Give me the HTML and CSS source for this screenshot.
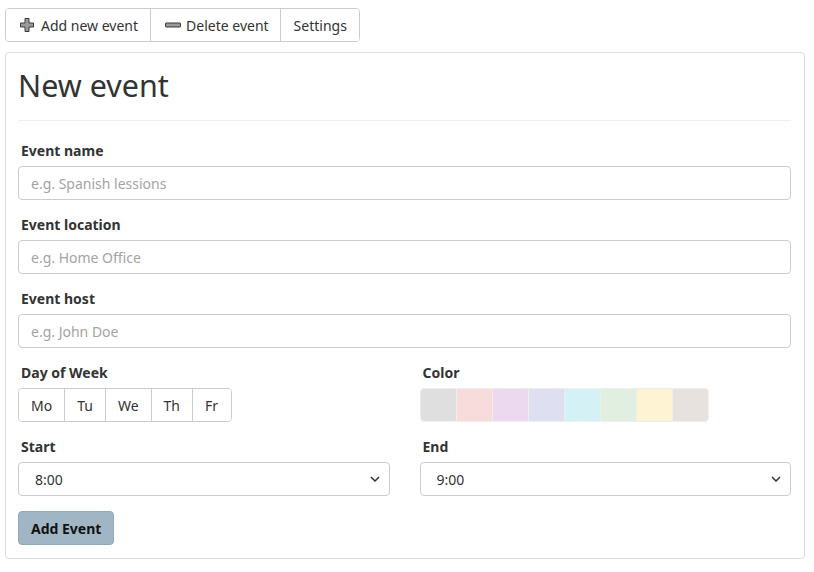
FILE: index.html
```html
<!DOCTYPE html>
<html lang="en">
<head>
<meta charset="utf-8">
<title>New event</title>
<link rel="stylesheet" href="styles.css">
</head>
<body>
<div class="toolbar">
  <button class="tb-btn" type="button">
    <svg class="tb-icon" width="16" height="16" viewBox="0 0 16 16"><path d="M6 1.5h4v4.5h4.5v4h-4.5v4.5h-4v-4.5h-4.5v-4h4.5z" fill="#9a9a9a" stroke="#3a3a3a" stroke-width="1"/></svg>
    Add new event
  </button>
  <button class="tb-btn tb-del" type="button">
    <svg class="tb-icon" width="16" height="16" viewBox="0 0 16 16"><rect x="0.5" y="6" width="15" height="4" rx="0.5" fill="#9a9a9a" stroke="#3a3a3a" stroke-width="1"/></svg>
    Delete event
  </button>
  <button class="tb-btn" type="button">Settings</button>
</div>

<div class="card">
  <h1 class="title">New event</h1>
  <hr class="divider">

  <div class="group">
    <label class="lbl">Event name</label>
    <input class="field" type="text" placeholder="e.g. Spanish lessions">
  </div>
  <div class="group">
    <label class="lbl">Event location</label>
    <input class="field" type="text" placeholder="e.g. Home Office">
  </div>
  <div class="group">
    <label class="lbl">Event host</label>
    <input class="field" type="text" placeholder="e.g. John Doe">
  </div>

  <div class="cols">
    <div class="group">
      <label class="lbl">Day of Week</label>
      <div class="days">
        <button class="day" type="button">Mo</button>
        <button class="day" type="button">Tu</button>
        <button class="day" type="button">We</button>
        <button class="day" type="button">Th</button>
        <button class="day" type="button">Fr</button>
      </div>
    </div>
    <div class="group">
      <label class="lbl">Color</label>
      <div class="swatches">
        <span class="sw sw-gray"></span>
        <span class="sw sw-red"></span>
        <span class="sw sw-purple"></span>
        <span class="sw sw-indigo"></span>
        <span class="sw sw-cyan"></span>
        <span class="sw sw-green"></span>
        <span class="sw sw-yellow"></span>
        <span class="sw sw-brown"></span>
      </div>
    </div>
    <div class="group">
      <label class="lbl">Start</label>
      <select class="field sel"><option>8:00</option><option>9:00</option></select>
    </div>
    <div class="group">
      <label class="lbl">End</label>
      <select class="field sel"><option>9:00</option><option>10:00</option></select>
    </div>
  </div>

  <button class="submit" type="button">Add Event</button>
</div>
</body>
</html>
```

FILE: styles.css
```css
* { box-sizing: border-box; }

body {
  margin: 0;
  padding: 8px 9px 0 5px;
  font-family: "Noto Sans", "Open Sans", sans-serif;
  font-size: 14px;
  color: #333;
  background: #fff;
}

.toolbar {
  display: flex;
  width: fit-content;
  border: 1px solid #ccc;
  border-radius: 4px;
  background: #fff;
  overflow: hidden;
}

.tb-btn {
  display: flex;
  align-items: center;
  gap: 6px;
  height: 32px;
  padding: 0 12px 0 13px;
  border: 0;
  border-left: 1px solid #ccc;
  background: #fff;
  font: inherit;
  color: #333;
}
.tb-btn:first-child { border-left: 0; }
.tb-del { gap: 5px; padding: 0 11px 0 14px; }
.tb-icon { display: block; }

.card {
  margin-top: 10px;
  border: 1px solid #ddd;
  border-radius: 4px;
  padding: 13px 13px 13px 12px;
}

.title {
  margin: 0;
  font-size: 30.5px;
  font-weight: 400;
  line-height: 38px;
  color: #333;
}

.divider {
  margin: 16px 0 20px;
  border: 0;
  border-top: 1px solid #eee;
}

.group { margin-bottom: 15px; }

.lbl {
  display: block;
  padding-left: 3px;
  margin-bottom: 5px;
  font-weight: 700;
  line-height: 20px;
  color: #333;
}

.field {
  display: block;
  width: 100%;
  height: 34px;
  padding: 0 12px;
  border: 1px solid #ccc;
  border-radius: 4px;
  font: inherit;
  color: #333;
  background: #fff;
  outline: none;
}
.field::placeholder { color: #a3a3a3; }

.sel {
  appearance: none;
  -webkit-appearance: none;
  padding-left: 16px;
  background-image: url("data:image/svg+xml;utf8,<svg xmlns='http://www.w3.org/2000/svg' width='10' height='6' viewBox='0 0 10 6'><path d='M1 1l4 4 4-4' fill='none' stroke='%23333' stroke-width='1.5'/></svg>");
  background-repeat: no-repeat;
  background-position: right 9px center;
}

.cols {
  display: grid;
  grid-template-columns: 1fr 1fr;
  column-gap: 30px;
}

.days {
  display: flex;
  width: fit-content;
  border: 1px solid #ccc;
  border-radius: 4px;
  overflow: hidden;
}
.day {
  height: 32px;
  padding: 0 12px;
  border: 0;
  border-left: 1px solid #ccc;
  background: #fff;
  font: inherit;
  color: #333;
}
.day:first-child { border-left: 0; }
.day:last-child { padding-right: 13px; }

.swatches {
  display: flex;
  width: fit-content;
  border: 1px solid #eee;
  border-radius: 4px;
  overflow: hidden;
}
.sw {
  display: block;
  width: 36px;
  height: 32px;
  border-left: 1px solid #eee;
}
.sw:first-child { border-left: 0; width: 35px; }
.sw-gray { background: #dfdfdf; }
.sw-red { background: #f8dbdb; }
.sw-purple { background: #ecd8ef; }
.sw-indigo { background: #dee0f1; }
.sw-cyan { background: #d4f1f5; }
.sw-green { background: #e0efe0; }
.sw-yellow { background: #fef3d3; }
.sw-brown { background: #e7e2de; }

.submit {
  display: block;
  height: 34px;
  padding: 0 12px;
  border: 1px solid #8fa9b9;
  border-radius: 4px;
  background: #a0b6c4;
  font: inherit;
  font-weight: 700;
  color: #111;
}
```
